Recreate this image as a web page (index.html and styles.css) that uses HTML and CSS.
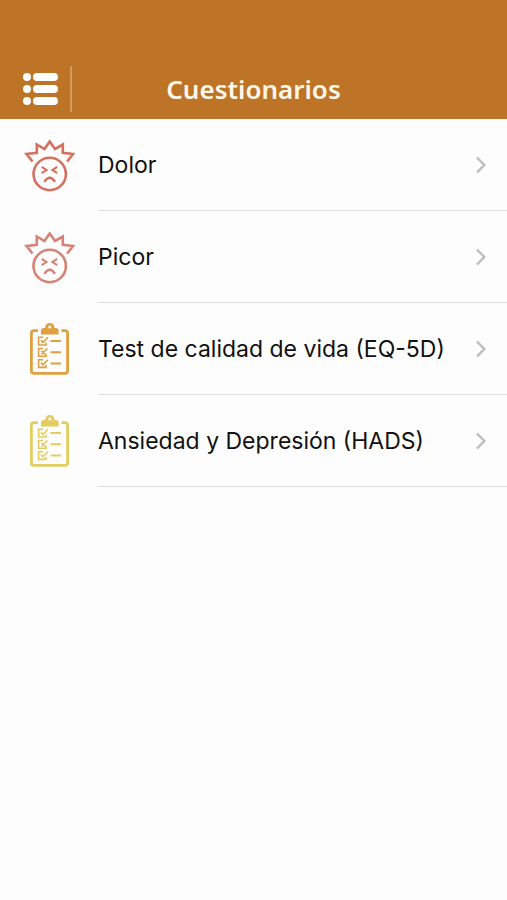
FILE: index.html
```html
<!DOCTYPE html>
<html lang="es">
<head>
    <meta charset="UTF-8">
    <meta name="viewport" content="width=device-width, initial-scale=1.0">
    <title>Cuestionarios</title>
    <link rel="stylesheet" href="styles.css">
</head>
<body>
    <!-- Shared icons -->
    <svg class="sprite" aria-hidden="true">
        <symbol id="face" viewBox="0 0 52 54">
            <g fill="none" stroke="currentColor" stroke-width="2.6">
                <path d="M8.5 23.5 L2.5 16 L12.8 14.8 V6.5 L20.5 11 L25.7 3.5 L31 11 L38.8 6.5 V14.8 L49 16 L43.2 23.5"/>
                <circle cx="25.7" cy="36" r="16.2"/>
                <path d="M17.7 28.8 L22.5 32 L17.7 35.2 M33.2 28.8 L28.4 32 L33.2 35.2" stroke-width="2.1"/>
                <path d="M20.4 43.8 Q25.7 35.8 31 43.8" stroke-width="2.4"/>
            </g>
        </symbol>
        <symbol id="clipboard" viewBox="0 0 52 54">
            <g fill="none" stroke="currentColor" stroke-width="2.8">
                <path d="M14 8.7 H10 Q7.4 8.7 7.4 11.3 V48.7 Q7.4 51.3 10 51.3 H41 Q43.6 51.3 43.6 48.7 V11.3 Q43.6 8.7 41 8.7 H37.5"/>
                <path d="M26.5 19 H37 M26.5 30.2 H37 M26.5 41.4 H37" stroke-width="2"/>
                <g stroke-width="1.6">
                    <path d="M19 15.3 H14.6 V23 H22 V20.5 M17 18 L19 20.5 L24 15.3"/>
                    <path d="M19 26.5 H14.6 V34.2 H22 V31.7 M17.3 28.8 L21.5 32.5 M17.3 32.5 L23.5 26.5"/>
                    <path d="M19 37.7 H14.6 V45.4 H22 V42.9 M17 40.4 L19 42.9 L24 37.7"/>
                </g>
            </g>
            <path fill="currentColor" fill-rule="evenodd" d="M17 12.5 V8.5 Q17 6 20 6 H21 Q21.5 1 25.8 1 Q30.1 1 30.6 6 H31.5 Q34.6 6 34.6 8.5 V12.5 Z M25.8 3.4 A1.5 1.5 0 1 0 25.8 6.4 A1.5 1.5 0 1 0 25.8 3.4 Z"/>
        </symbol>
        <symbol id="chevron" viewBox="0 0 12 20">
            <path d="M2 2.5 L9.3 10 L2 17.5" fill="none" stroke="currentColor" stroke-width="2.4"/>
        </symbol>
    </svg>

    <header class="header">
        <button class="menu-btn" type="button" aria-label="Menú">
            <svg width="36" height="34" viewBox="0 0 36 34" fill="#fff">
                <circle cx="4" cy="5" r="4"/>
                <circle cx="4" cy="17" r="4"/>
                <circle cx="4" cy="29" r="4"/>
                <rect x="10" y="1" width="25" height="8" rx="4"/>
                <rect x="10" y="13" width="25" height="8" rx="4"/>
                <rect x="10" y="25" width="25" height="8" rx="4"/>
            </svg>
        </button>
        <h1 class="title">Cuestionarios</h1>
    </header>

    <main>
        <ul class="list">
            <li>
                <a class="row" href="#dolor">
                    <svg class="icon red"><use href="#face"/></svg>
                    <span class="label">Dolor <svg class="chevron"><use href="#chevron"/></svg></span>
                </a>
            </li>
            <li>
                <a class="row" href="#picor">
                    <svg class="icon pink"><use href="#face"/></svg>
                    <span class="label">Picor <svg class="chevron"><use href="#chevron"/></svg></span>
                </a>
            </li>
            <li>
                <a class="row" href="#eq5d">
                    <svg class="icon orange"><use href="#clipboard"/></svg>
                    <span class="label">Test de calidad de vida (EQ-5D) <svg class="chevron"><use href="#chevron"/></svg></span>
                </a>
            </li>
            <li>
                <a class="row" href="#hads">
                    <svg class="icon yellow"><use href="#clipboard"/></svg>
                    <span class="label">Ansiedad y Depresión (HADS) <svg class="chevron"><use href="#chevron"/></svg></span>
                </a>
            </li>
        </ul>
    </main>
</body>
</html>
```

FILE: styles.css
```css
body {
    margin: 0;
    background-color: #fdfdfd;
    color: #111;
    font-family: Inter, "Liberation Sans", sans-serif;
}
.sprite {
    display: none;
}

/* Header */
.header {
    display: grid;
    grid-template-columns: 72px 1fr 72px;
    align-items: center;
    padding-top: 58px;
    height: 61px;
    background-color: #bd7427;
}
.menu-btn {
    display: flex;
    align-items: center;
    height: 46px;
    padding: 0 0 0 23px;
    border: none;
    border-right: 2px solid #d39c57;
    background: none;
    cursor: pointer;
}
.title {
    margin: 0;
    color: #fff8ea;
    font-family: "Noto Sans", sans-serif;
    font-size: 26px;
    font-weight: 600;
    line-height: 32px;
    text-align: center;
}

/* List */
.list {
    margin: 0;
    padding: 0;
    list-style: none;
}
.row {
    display: flex;
    align-items: center;
    gap: 22px;
    padding-left: 24px;
    color: inherit;
    text-decoration: none;
}
.icon {
    flex: none;
    width: 52px;
    height: 54px;
}
.label {
    flex: 1;
    display: flex;
    align-items: center;
    justify-content: space-between;
    height: 91px;
    padding-right: 20px;
    border-bottom: 1px solid #dedede;
    font-size: 23px;
}
.chevron {
    width: 12px;
    height: 20px;
    color: #bdbdbd;
}

.red {
    color: #d4705c;
}
.pink {
    color: #d58377;
}
.orange {
    color: #dea040;
}
.yellow {
    color: #e3cd61;
}
```
